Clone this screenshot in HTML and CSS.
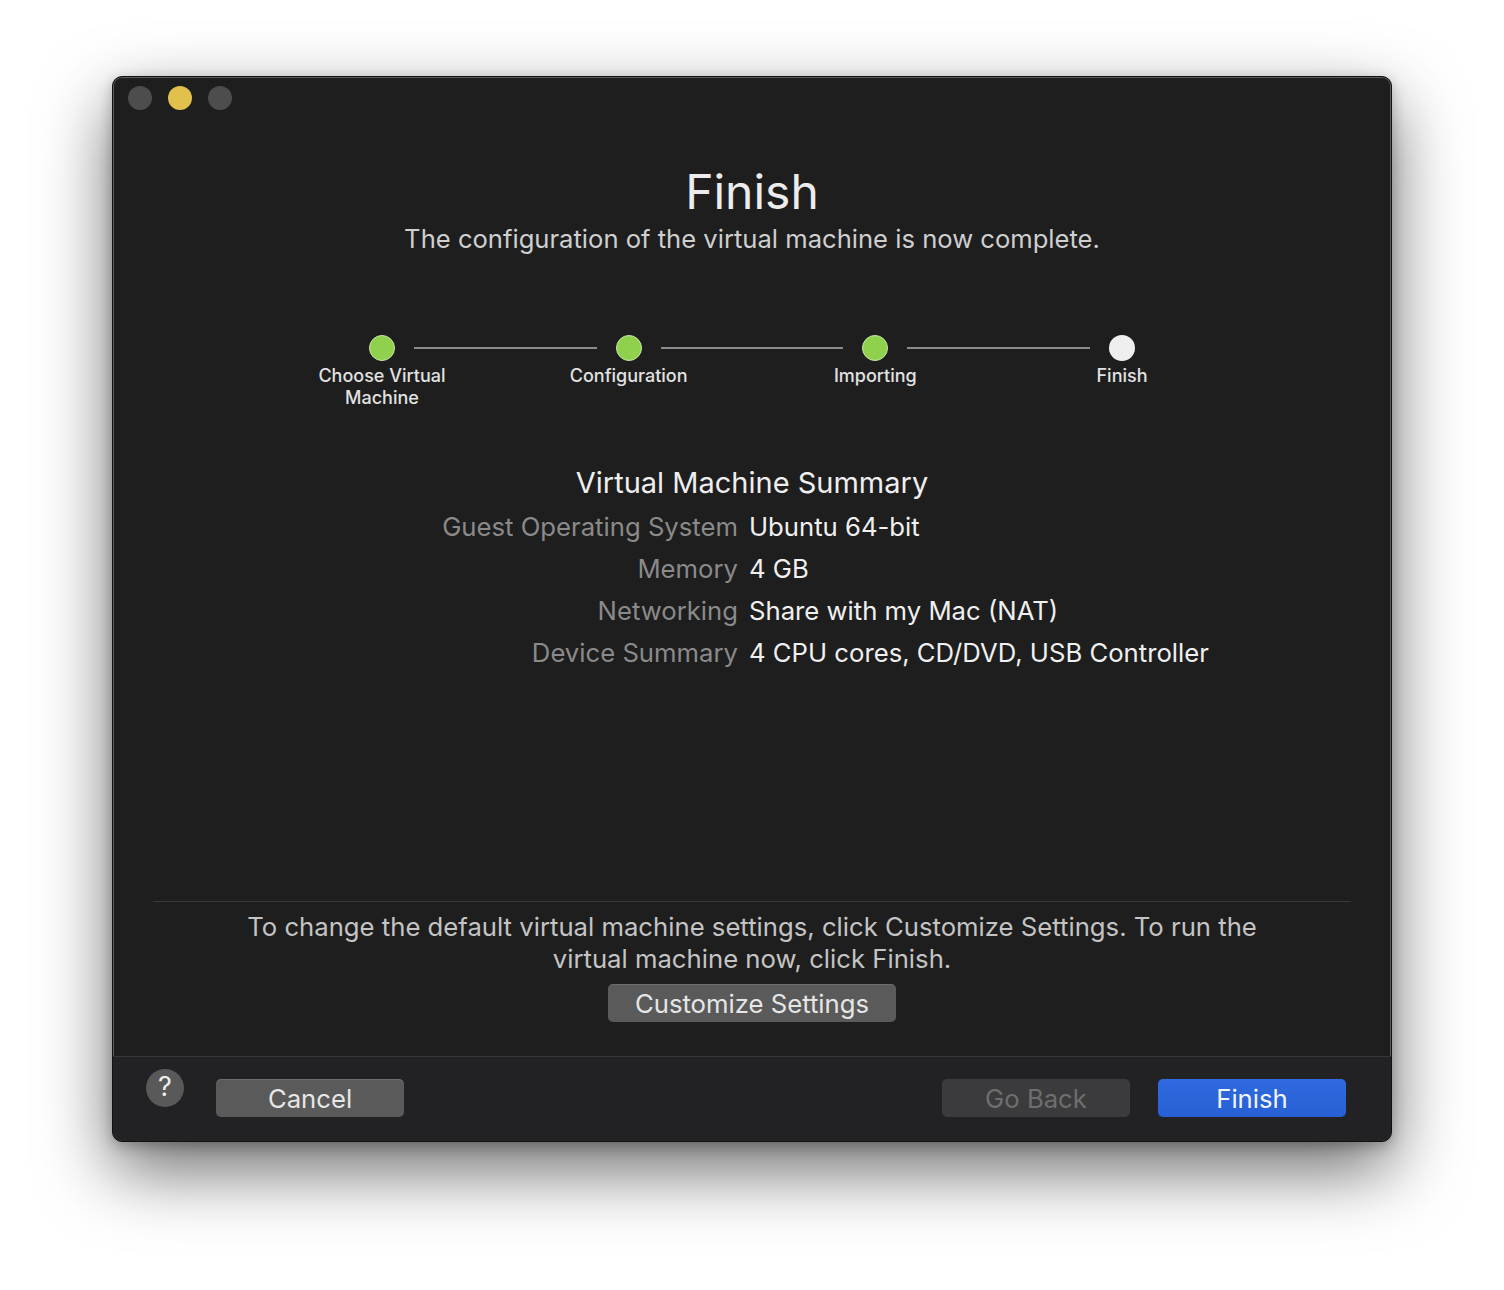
FILE: index.html
```html
<!DOCTYPE html>
<html lang="en">
<head>
<meta charset="utf-8">
<title>Finish</title>
<link rel="stylesheet" href="styles.css">
</head>
<body>
<div class="window">
  <div class="titlebar">
    <span class="light gray"></span>
    <span class="light yellow"></span>
    <span class="light gray"></span>
  </div>
  <div class="main">
    <h1 class="title">Finish</h1>
    <p class="subtitle">The configuration of the virtual machine is now complete.</p>
    <div class="stepper">
      <div class="step done"><span class="dot"></span><span class="label">Choose Virtual<br>Machine</span></div>
      <div class="step done"><span class="dot"></span><span class="label">Configuration</span></div>
      <div class="step done"><span class="dot"></span><span class="label">Importing</span></div>
      <div class="step current"><span class="dot"></span><span class="label">Finish</span></div>
    </div>
    <h2 class="summary-title">Virtual Machine Summary</h2>
    <div class="summary">
      <span class="key">Guest Operating System</span><span class="val">Ubuntu 64-bit</span>
      <span class="key">Memory</span><span class="val">4 GB</span>
      <span class="key">Networking</span><span class="val">Share with my Mac (NAT)</span>
      <span class="key">Device Summary</span><span class="val">4 CPU cores, CD/DVD, USB Controller</span>
    </div>
    <div class="spacer"></div>
    <div class="bottom">
      <p class="hint">To change the default virtual machine settings, click Customize Settings. To run the virtual machine now, click Finish.</p>
      <button class="btn customize">Customize Settings</button>
    </div>
  </div>
  <div class="footer">
    <button class="help">?</button>
    <button class="btn cancel">Cancel</button>
    <div class="grow"></div>
    <button class="btn disabled">Go Back</button>
    <button class="btn primary">Finish</button>
  </div>
</div>
</body>
</html>
```

FILE: styles.css
```css
* { box-sizing: border-box; }
html, body { margin: 0; padding: 0; background: #ffffff; }
body {
  min-height: 1290px;
  padding: 76px 112px;
  font-family: Inter, "Noto Sans", "Liberation Sans", sans-serif;
}
.window {
  width: 1280px;
  height: 1066px;
  background: #1e1e1e;
  border-radius: 10px;
  border: 1px solid #111;
  box-shadow: inset 0 0 0 1px #5c5c5c, 0 28px 70px rgba(0,0,0,0.58), 0 4px 14px rgba(0,0,0,0.25);
  display: flex;
  flex-direction: column;
  overflow: hidden;
}
.titlebar {
  height: 43px;
  display: flex;
  gap: 16px;
  padding: 9px 0 0 15px;
}
.light { width: 24px; height: 24px; border-radius: 50%; display: block; }
.light.gray { background: #4d4d4d; }
.light.yellow { background: #e1c04c; }
.main {
  flex: 1;
  display: flex;
  flex-direction: column;
  align-items: stretch;
}
.title {
  margin: 43px 0 0;
  font-size: 48px;
  line-height: 58px;
  font-weight: 400;
  color: #ececec;
  text-align: center;
}
.subtitle {
  margin: 3px 0 0;
  font-size: 25.6px;
  line-height: 30px;
  color: #cfcfcf;
  text-align: center;
}
.stepper {
  margin: 81px auto 0;
  display: grid;
  grid-template-columns: repeat(4, 246.7px);
}
.step {
  position: relative;
  display: flex;
  flex-direction: column;
  align-items: center;
}
.step:not(:last-child)::after {
  content: "";
  position: absolute;
  top: 12px;
  left: calc(50% + 32px);
  right: calc(-50% + 32px);
  height: 2px;
  background: #8b8b8b;
}
.dot {
  width: 26px;
  height: 26px;
  border-radius: 50%;
  display: block;
}
.done .dot { background: #8fd14c; border: 1px solid #c9e8a8; }
.current .dot { background: #efefef; }
.label {
  margin-top: 4px;
  font-size: 18px;
  line-height: 22px;
  color: #e2e2e2;
  text-align: center;
  font-weight: 500;
}
.summary-title {
  margin: 57px 0 0;
  font-size: 29px;
  line-height: 34px;
  font-weight: 400;
  color: #efefef;
  text-align: center;
}
.summary {
  margin-top: 6px;
  display: grid;
  grid-template-columns: 625px 1fr;
  column-gap: 11px;
  font-size: 25.7px;
  line-height: 42px;
}
.key { text-align: right; color: #8a8a8a; }
.val { color: #f0f0f0; }
.spacer { flex: 1; }
.bottom {
  margin: 0 40px;
  border-top: 1px solid #383838;
  padding-top: 9px;
  display: flex;
  flex-direction: column;
  align-items: center;
  padding-bottom: 34px;
}
.hint {
  margin: 0;
  width: 1080px;
  font-size: 25.7px;
  line-height: 32px;
  color: #c4c4c4;
  text-align: center;
}
.btn {
  font-family: inherit;
  border: none;
  border-radius: 5px;
  height: 38px;
  font-size: 25.7px;
  color: #e6e6e6;
  background: #5a5a5a;
  padding: 0;
}
.customize {
  margin-top: 9px;
  width: 288px;
  box-shadow: inset 0 1px 0 rgba(255,255,255,0.12);
}
.footer {
  height: 85px;
  background: #222224;
  border-top: 1px solid #363636;
  display: flex;
  align-items: flex-start;
  padding: 12px 45px 0 33px;
}
.help {
  width: 38px;
  height: 38px;
  border-radius: 50%;
  border: none;
  background: #595959;
  color: #eeeeee;
  font-family: inherit;
  font-size: 27px;
  line-height: 34px;
  padding: 0 0 3px;
  margin-right: 32px;
}
.cancel { width: 188px; margin-top: 10px; box-shadow: inset 0 1px 0 rgba(255,255,255,0.12); }
.grow { flex: 1; }
.disabled {
  width: 188px;
  margin-top: 10px;
  background: #3b3b3d;
  color: #6e6e6e;
  margin-right: 28px;
}
.primary {
  width: 188px;
  margin-top: 10px;
  background: linear-gradient(#2f6ae0, #2760d4);
  color: #f2f4fa;
}
```
